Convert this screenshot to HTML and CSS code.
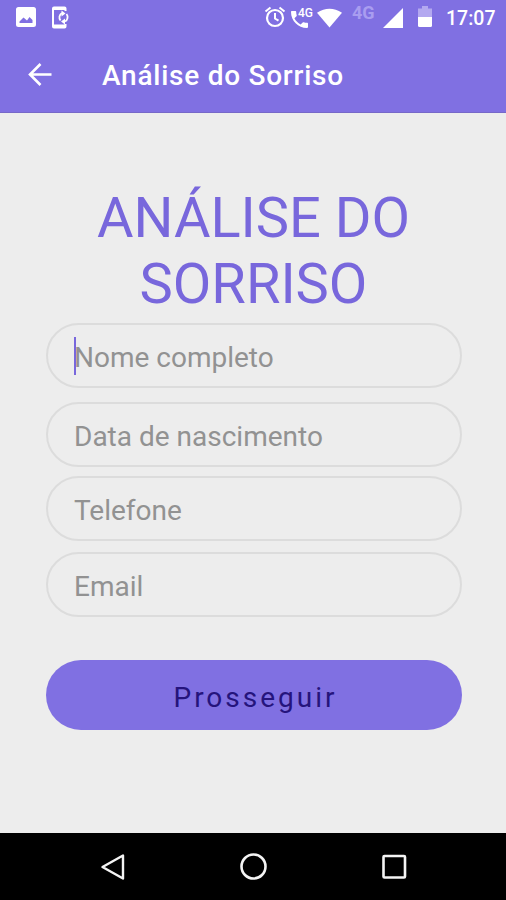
FILE: index.html
```
<!DOCTYPE html>
<html lang="pt-BR">
<head>
    <meta charset="UTF-8">
    <meta name="viewport" content="width=device-width, initial-scale=1.0">
    <title>Análise do Sorriso</title>
    <link rel="stylesheet" href="styles.css">
</head>
<body>

    <div class="status-bar">
        <svg class="icon-image" width="20" height="20" viewBox="0 0 20 20">
            <path fill="#fff" fill-rule="evenodd" d="M2.5 0h15A2.500 2.500 0 0 1 20 2.500v15a2.500 2.500 0 0 1-2.500 2.500h-15A2.500 2.500 0 0 1 0 17.500v-15A2.500 2.500 0 0 1 2.500 0zM3.500 16h13V13l-3-3-2.500 3.500-3.500-3-4 4z"/>
        </svg>
        <svg class="icon-sync" width="20" height="24" viewBox="0 0 20 24">
            <path fill="none" stroke="#fff" stroke-width="2" d="M14.500 5V2.500Q14.500 1.500 13.500 1.500H3Q2 1.500 2 2.500V20.500Q2 21.500 3 21.500H13.500Q14.500 21.500 14.500 20.500V18"/>
            <path stroke="#fff" stroke-width="3" d="M2 2.500h12.500M2 20h12.500"/>
            <path fill="none" stroke="#fff" stroke-width="1.800" d="M11 7A5 5 0 0 0 9.500 14.500M14 15.500A5 5 0 0 0 15.500 8"/>
            <path fill="#fff" d="M10.500 4.500l4 3-4 3zM14 12.500v6l-4-3z"/>
        </svg>
        <svg class="icon-alarm" width="22" height="22" viewBox="0 0 22 22">
            <circle cx="11" cy="12" r="8" fill="none" stroke="#fff" stroke-width="2.200"/>
            <path fill="none" stroke="#fff" stroke-width="2" d="M1.500 5.500l5-4M20.500 5.500l-5-4M11 7v5.500l3.500 2.200"/>
        </svg>
        <div class="call">
            <svg width="17" height="17" viewBox="3 3 18 18">
                <path fill="#fff" d="M6.620 10.790c1.440 2.830 3.760 5.140 6.590 6.590l2.200-2.200c.27-.27.670-.36 1.020-.24 1.120.37 2.330.57 3.570.57.550 0 1 .45 1 1V20c0 .55-.45 1-1 1-9.390 0-17-7.610-17-17 0-.55.450-1 1-1h3.500c.55 0 1 .450 1 1 0 1.250.200 2.450.570 3.570.110.350.030.740-.250 1.020l-2.200 2.200z"/>
            </svg>
            <span>4G</span>
        </div>
        <svg class="icon-wifi" width="25" height="20" viewBox="0 0 26 20">
            <path fill="#fff" d="M0 4.500Q13-4 26 4.500L13 20z"/>
        </svg>
        <span class="network">4G</span>
        <svg class="icon-signal" width="20" height="20" viewBox="0 0 20 20">
            <path fill="#fff" d="M20 0v20H0z"/>
        </svg>
        <svg class="icon-battery" width="14" height="21" viewBox="0 0 14 21">
            <path fill="#b3a8f0" d="M4 0h6v2.500h4V11H0V2.500h4z"/>
            <path fill="#fff" d="M0 11h14v8.500q0 1.500-1.500 1.500h-11Q0 21 0 19.500z"/>
        </svg>
        <span class="clock">17:07</span>
    </div>

    <header class="toolbar">
        <svg class="back" width="24" height="23" viewBox="0 0 24 23">
            <path fill="none" stroke="#fff" stroke-width="2.600" d="M23.500 11.500H2.500M12.500 1L2 11.500 12.500 22"/>
        </svg>
        <span class="toolbar-title">Análise do Sorriso</span>
    </header>

    <main class="content">
        <h1>ANÁLISE DO SORRISO</h1>

        <form class="form">
            <div class="field field-name">
                <input type="text" placeholder="Nome completo">
                <span class="caret"></span>
            </div>
            <div class="field field-birth">
                <input type="text" placeholder="Data de nascimento">
            </div>
            <div class="field field-phone">
                <input type="tel" placeholder="Telefone">
            </div>
            <div class="field field-email">
                <input type="email" placeholder="Email">
            </div>
            <button type="button" class="btn-next">Prosseguir</button>
        </form>
    </main>

    <nav class="nav-bar">
        <svg width="28" height="28" viewBox="0 0 28 28">
            <path fill="none" stroke="#f4f4f4" stroke-width="2.400" stroke-linejoin="round" d="M24 2.500v23L3.500 14z"/>
        </svg>
        <svg width="28" height="28" viewBox="0 0 28 28">
            <circle cx="13.500" cy="13.500" r="12" fill="none" stroke="#f4f4f4" stroke-width="2.600"/>
        </svg>
        <svg width="28" height="28" viewBox="0 0 28 28">
            <rect x="3.500" y="3" width="21.500" height="21.500" rx="1" fill="none" stroke="#f4f4f4" stroke-width="2.600"/>
        </svg>
    </nav>

</body>
</html>
```

FILE: styles.css
```
:root {
    --primary-color: #8070e2;
    --title-color: #7867dc;
    --background-color: #ededed;
    --border-color: #dcdcdc;
    --hint-color: #929292;
}

* {
    box-sizing: border-box;
}

body {
    margin: 0;
    height: 900px;
    display: flex;
    flex-direction: column;
    font-family: Roboto, "Liberation Sans", sans-serif;
    background-color: var(--background-color);
    overflow: hidden;
}

svg {
    display: block;
    flex: none;
}

/* Status bar */
.status-bar {
    display: flex;
    align-items: flex-start;
    height: 38px;
    padding: 6px 0 0 16px;
    background-color: var(--primary-color);
    color: #fff;
}

.icon-image {
    margin-top: 1px;
}

.icon-sync {
    margin-left: 15px;
}

.icon-alarm {
    margin-left: 193px;
}

.call {
    position: relative;
    width: 22px;
    margin: 5px 0 0 5px;
}

.call span {
    position: absolute;
    left: 7px;
    top: -4px;
    font-size: 12px;
    line-height: 12px;
    font-weight: 500;
}

.icon-wifi {
    margin: 2px 0 0 4px;
}

.network {
    width: 24px;
    margin-left: 10px;
    font-size: 18px;
    line-height: 14px;
    font-weight: 700;
    color: #a99df0;
}

.icon-signal {
    margin: 2px 0 0 7px;
}

.icon-battery {
    margin-left: 15px;
}

.clock {
    margin-left: 14px;
    font-size: 19.5px;
    line-height: 25px;
    font-weight: 500;
}

/* Toolbar */
.toolbar {
    display: flex;
    align-items: center;
    height: 75px;
    padding: 0 0 2px 28px;
    background-color: var(--primary-color);
    border-bottom: 1px solid #7668c8;
    color: #fff;
}

.toolbar-title {
    margin: 2px 0 0 50px;
    font-size: 28px;
    font-weight: 500;
    letter-spacing: 0.75px;
    white-space: nowrap;
}

/* Form */
.content {
    flex: 1;
    padding: 72px 44.5px 0 45.5px;
}

h1 {
    margin: 0 0 6px;
    font-size: 56px;
    line-height: 66px;
    font-weight: 400;
    text-align: center;
    color: var(--title-color);
}

.form {
    display: flex;
    flex-direction: column;
}

.field {
    position: relative;
    height: 65px;
}

.field-birth {
    margin-top: 14px;
}

.field-phone {
    margin-top: 9px;
}

.field-email {
    margin-top: 11px;
}

.field input {
    display: block;
    width: 100%;
    height: 100%;
    padding: 3px 26px 0 26.5px;
    border: 2px solid var(--border-color);
    border-radius: 33px;
    background: transparent;
    font-family: inherit;
    font-size: 28px;
    outline: none;
}

.field input::placeholder {
    color: var(--hint-color);
    opacity: 1;
}

.caret {
    position: absolute;
    left: 28.5px;
    top: 14px;
    width: 2px;
    height: 38px;
    background-color: var(--title-color);
}

.btn-next {
    height: 70px;
    margin-top: 43px;
    padding: 4px 0 0 4px;
    border: none;
    border-radius: 35px;
    background-color: var(--primary-color);
    color: #25147c;
    font-family: inherit;
    font-size: 28px;
    letter-spacing: 3px;
}

/* Navigation bar */
.nav-bar {
    display: flex;
    justify-content: space-between;
    height: 67px;
    padding: 20px 98px 0 99px;
    background-color: #000;
}
```
